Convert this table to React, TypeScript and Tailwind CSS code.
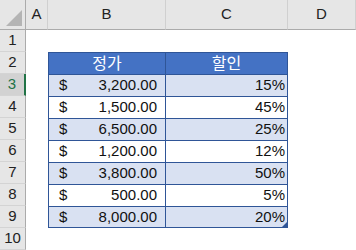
const cols = ["A", "B", "C", "D"];

const rows = [
  { price: "3,200.00", off: "15%" },
  { price: "1,500.00", off: "45%" },
  { price: "6,500.00", off: "25%" },
  { price: "1,200.00", off: "12%" },
  { price: "3,800.00", off: "50%" },
  { price: "500.00", off: "5%" },
  { price: "8,000.00", off: "20%" },
];

const font = {
  fontFamily: '"Liberation Sans", "Noto Sans CJK KR", sans-serif',
};

function RowHead({ n, active }: { n: number; active?: boolean }) {
  return (
    <div
      className={`h-[22px] flex items-center justify-center text-[15px] border-b border-[#d4d4d4] ${
        active
          ? "bg-[#d2d2d2] text-[#217346] border-r-2 border-r-[#217346]"
          : "bg-[#e6e6e6] text-[#222] border-r border-r-[#ababab]"
      }`}
    >
      {n}
    </div>
  );
}

export default function App() {
  return (
    <div
      className="w-[356px] h-[250px] bg-white overflow-hidden grid grid-cols-[26px_22px_118px_122px_68px] grid-rows-[30px_repeat(10,22px)]"
      style={font}
    >
      {/* column headers */}
      <div className="relative bg-[#e6e6e6] border-r border-b border-[#ababab]">
        <svg className="absolute right-[3px] bottom-[3px]" width="16" height="16" viewBox="0 0 16 16">
          <polygon points="16,0 16,16 0,16" fill="#b4b4b4" />
        </svg>
      </div>
      {cols.map((c) => (
        <div
          key={c}
          className="bg-[#e6e6e6] border-r border-r-[#d0d0d0] border-b border-b-[#ababab] flex items-center justify-center text-[15px] text-[#222]"
        >
          {c}
        </div>
      ))}

      {/* row 1 */}
      <RowHead n={1} />
      <div className="col-span-4" />

      {/* row 2: table header */}
      <RowHead n={2} />
      <div />
      <div className="bg-[#4472c4] border-t border-l border-r border-[#2f5597] text-white flex items-center justify-center text-[16px]">
        정가
      </div>
      <div className="bg-[#4472c4] border-t border-r border-[#2f5597] text-white flex items-center justify-center text-[16px]">
        할인
      </div>
      <div />

      {/* data rows */}
      {rows.map((r, i) => {
        const band = i % 2 === 0 ? "bg-[#d9e1f2]" : "bg-white";
        const last = i === rows.length - 1;
        return [
          <RowHead key={`h${i}`} n={i + 3} active={i === 0} />,
          <div key={`a${i}`} />,
          <div
            key={`b${i}`}
            className={`${band} border-l border-r border-t border-[#2f5597] ${last ? "border-b" : ""} flex items-center justify-between pl-[10px] pr-[8px] text-[15px] text-[#111]`}
          >
            <span>$</span>
            <span>{r.price}</span>
          </div>,
          <div
            key={`c${i}`}
            className={`relative ${band} border-r border-t border-[#2f5597] ${last ? "border-b" : ""} flex items-center justify-end pr-[2px] text-[15px] text-[#111]`}
          >
            {r.off}
            {last && (
              <svg className="absolute right-0 bottom-0" width="5" height="5" viewBox="0 0 5 5">
                <polygon points="5,0 5,5 0,5" fill="#2f5597" />
              </svg>
            )}
          </div>,
          <div key={`d${i}`} />,
        ];
      })}

      {/* row 10 */}
      <RowHead n={10} />
      <div className="col-span-4" />
    </div>
  );
}
